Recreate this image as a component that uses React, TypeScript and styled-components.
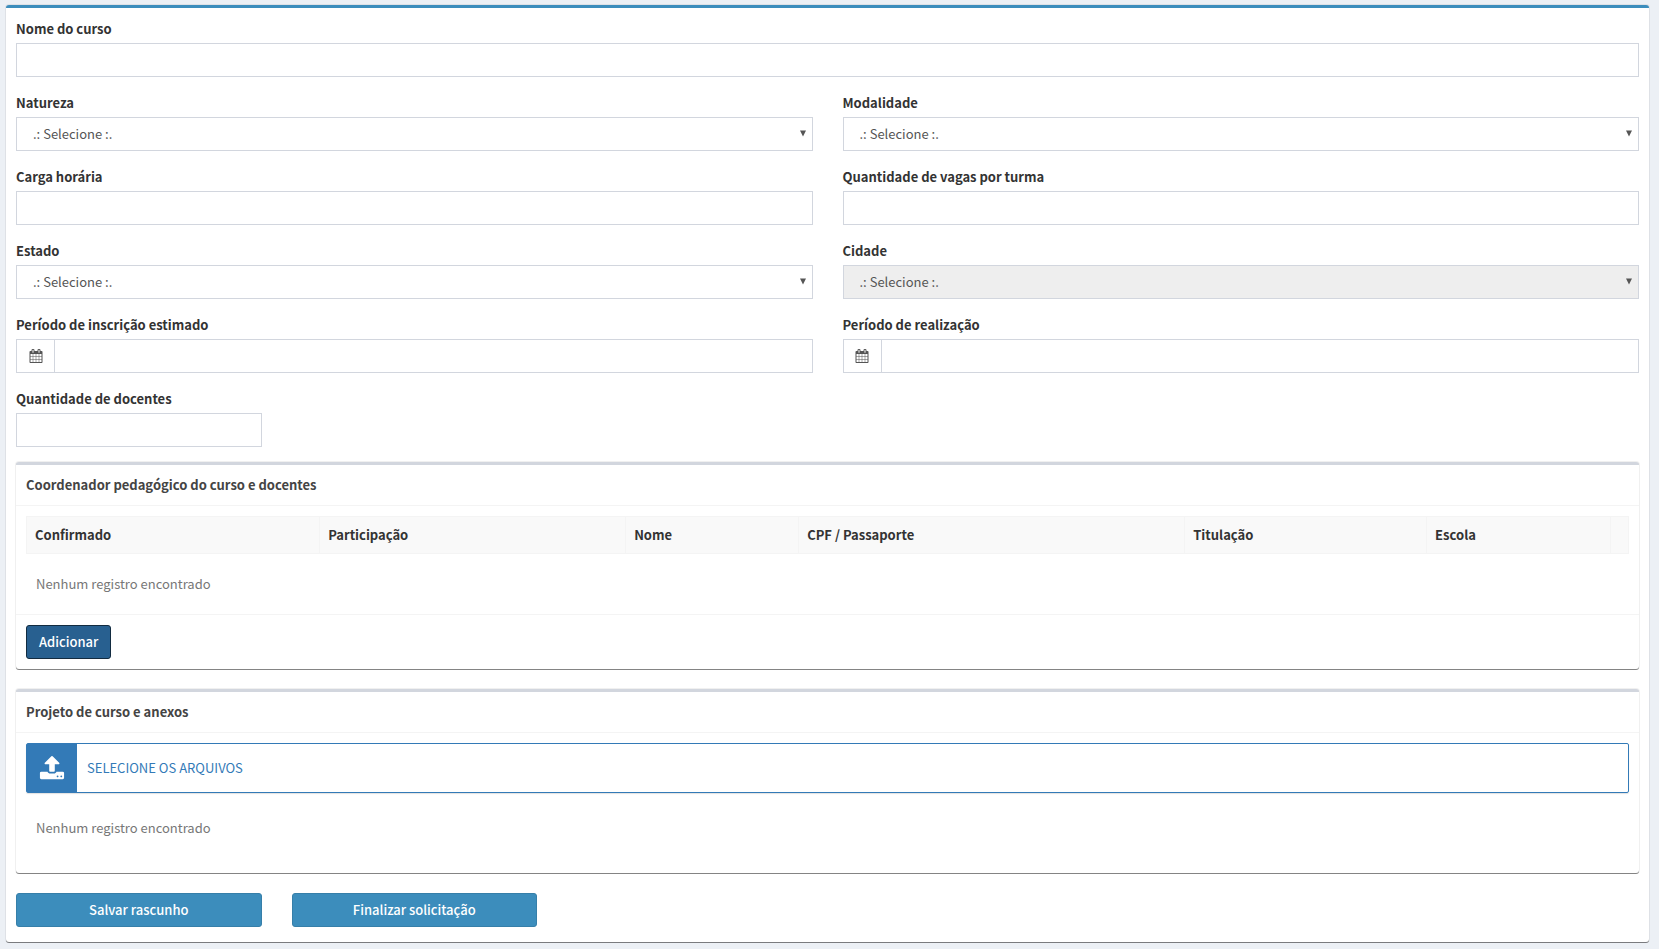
import React, { useId } from "react";
import styled, { createGlobalStyle } from "styled-components";

const GlobalStyle = createGlobalStyle`
  *, *::before, *::after { box-sizing: border-box; }
  body {
    margin: 0;
    background: #ecf0f5;
    color: #333;
    font: 400 13px/20px "Noto Sans CJK JP", "Noto Sans", sans-serif;
  }
  input, select, button { font: inherit; }
`;

const Page = styled.main`
  padding: 5px 10px 6px 6px;
`;

const Box = styled.section<{ $accent: string }>`
  background: #fff;
  border-top: 3px solid ${(p) => p.$accent};
  border-radius: 3px;
  box-shadow: 0 1px 0 rgba(0, 0, 0, 0.45), 0 0 0 1px rgba(0, 0, 0, 0.06);
`;

const Form = styled.form`
  display: flex;
  flex-direction: column;
  padding: 10px 10px 15px;
`;

const Columns = styled.div<{ $count: number }>`
  display: grid;
  grid-template-columns: repeat(${(p) => p.$count}, minmax(0, 1fr));
  column-gap: 30px;
`;

const Group = styled.div`
  display: flex;
  flex-direction: column;
  margin-bottom: 15px;
`;

const Label = styled.label`
  margin-bottom: 3px;
  font-weight: 700;
  line-height: 22px;
`;

const TextInput = styled.input`
  flex: 1;
  width: 100%;
  min-width: 0;
  height: 34px;
  min-height: 34px;
  padding: 6px 12px;
  border: 1px solid #d2d6de;
  border-radius: 0;
  background: #fff;
  color: #555;
`;

const SelectWrap = styled.div`
  position: relative;
`;

const SelectInput = styled.select`
  display: block;
  width: 100%;
  height: 34px;
  padding: 6px 30px 6px 16px;
  border: 1px solid #d2d6de;
  border-radius: 0;
  appearance: none;
  background: #fff;
  color: #555;
  opacity: 1;
  &:disabled { background: #eee; }
`;

const Arrow = styled.svg`
  position: absolute;
  right: 7px;
  top: 13px;
  width: 6px;
  height: 7px;
  fill: #555;
  pointer-events: none;
`;

const InputGroup = styled.div`
  display: flex;
`;

const Addon = styled.span`
  display: flex;
  align-items: center;
  justify-content: center;
  width: 38px;
  border: 1px solid #d2d6de;
  border-right: 0;
  color: #555;
`;

const BoxHeader = styled.header`
  padding: 10px;
  border-bottom: 1px solid #f4f4f4;
`;

const BoxTitle = styled.h3`
  margin: 0;
  font-size: 13px;
  line-height: 20px;
  font-weight: 700;
  color: #444;
`;

const BoxBody = styled.div`
  padding: 10px;
`;

const BoxFooter = styled.footer`
  padding: 10px;
  border-top: 1px solid #f4f4f4;
`;

const Panels = styled.div`
  display: grid;
  row-gap: 20px;
  margin-bottom: 20px;
`;

const Table = styled.table`
  width: 100%;
  table-layout: fixed;
  border-collapse: collapse;
`;

const HeadCell = styled.th<{ $width?: string }>`
  width: ${(p) => p.$width ?? "auto"};
  height: 37px;
  padding: 8px;
  border: 1px solid #f4f4f4;
  background: #f9f9f9;
  text-align: left;
`;

const Empty = styled.p<{ $margin: string }>`
  margin: ${(p) => p.$margin};
  padding: 10px;
  color: #777;
`;

const Button = styled.button<{ $tone: "dark" | "light" }>`
  height: 34px;
  padding: 6px 12px;
  border: 1px solid ${(p) => (p.$tone === "dark" ? "#122b40" : "#367fa9")};
  border-radius: 3px;
  background: ${(p) => (p.$tone === "dark" ? "#286090" : "#3c8dbc")};
  color: #fff;
  font-weight: 500;
  line-height: 20px;
  cursor: pointer;
`;

const Upload = styled.label`
  position: relative;
  display: flex;
  align-items: center;
  height: 50px;
  border: 1px solid #337ab7;
  border-radius: 2px;
  box-shadow: 0 1px 1px rgba(0, 0, 0, 0.12);
  color: #337ab7;
  cursor: pointer;
`;

const UploadIcon = styled.span`
  display: flex;
  align-items: center;
  justify-content: center;
  align-self: stretch;
  width: 50px;
  margin-right: 10px;
  background: #337ab7;
  color: #fff;
`;

const FileInput = styled.input`
  position: absolute;
  inset: 0;
  width: 100%;
  opacity: 0;
  cursor: pointer;
`;

const Glyph = ({ size, d }: { size: number; d: string }) => (
  <svg width={size} height={size} viewBox="0 0 1792 1792" fill="currentColor" aria-hidden="true">
    <path d={d} />
  </svg>
);

const calendarPath =
  "M192 1664h288v-288h-288v288zM544 1664h320v-288h-320v288zM192 1312h288v-320h-288v320zM544 1312h320v-320h-320v320zM192 928h288v-288h-288v288zM928 1664h320v-288h-320v288zM544 928h320v-288h-320v288zM1312 1664h288v-288h-288v288zM928 1312h320v-320h-320v320zM576 448v-288q0-13-9.5-22.5t-22.5-9.5h-64q-13 0-22.5 9.5t-9.5 22.5v288q0 13 9.5 22.5t22.5 9.5h64q13 0 22.5-9.5t9.5-22.5zM1312 1312h288v-320h-288v320zM928 928h320v-288h-320v288zM1312 928h288v-288h-288v288zM1344 448v-288q0-13-9.5-22.5t-22.5-9.5h-64q-13 0-22.5 9.5t-9.5 22.5v288q0 13 9.5 22.5t22.5 9.5h64q13 0 22.5-9.5t9.5-22.5zM1728 384v1280q0 52-38 90t-90 38h-1408q-52 0-90-38t-38-90v-1280q0-52 38-90t90-38h128v-96q0-66 47-113t113-47h64q66 0 113 47t47 113v96h384v-96q0-66 47-113t113-47h64q66 0 113 47t47 113v96h128q52 0 90 38t38 90z";

const uploadPath =
  "M1344 1472q0-26-19-45t-45-19-45 19-19 45 19 45 45 19 45-19 19-45zm256 0q0-26-19-45t-45-19-45 19-19 45 19 45 45 19 45-19 19-45zm128-224v320q0 40-28 68t-68 28h-1472q-40 0-68-28t-28-68v-320q0-40 28-68t68-28h427q21 56 70.5 92t110.5 36h256q61 0 110.5-36t70.5-92h427q40 0 68 28t28 68zm-325-648q-17 40-59 40h-256v448q0 26-19 45t-45 19h-256q-26 0-45-19t-19-45v-448h-256q-42 0-59-40-17-39 14-69l448-448q18-19 45-19t45 19l448 448q31 30 14 69z";

function TextField({ label }: { label: string }) {
  const id = useId();
  return (
    <Group>
      <Label htmlFor={id}>{label}</Label>
      <TextInput id={id} type="text" />
    </Group>
  );
}

function SelectField({ label, disabled }: { label: string; disabled?: boolean }) {
  const id = useId();
  return (
    <Group>
      <Label htmlFor={id}>{label}</Label>
      <SelectWrap>
        <SelectInput id={id} disabled={disabled}>
          <option>.: Selecione :.</option>
        </SelectInput>
        <Arrow viewBox="0 0 6 7" aria-hidden="true">
          <path d="M0 0.5h6l-3 6z" />
        </Arrow>
      </SelectWrap>
    </Group>
  );
}

function DateField({ label }: { label: string }) {
  const id = useId();
  return (
    <Group>
      <Label htmlFor={id}>{label}</Label>
      <InputGroup>
        <Addon>
          <Glyph size={14} d={calendarPath} />
        </Addon>
        <TextInput id={id} type="text" />
      </InputGroup>
    </Group>
  );
}

const tableColumns = [
  { title: "Confirmado", width: "18.3%" },
  { title: "Participação", width: "19.1%" },
  { title: "Nome", width: "10.8%" },
  { title: "CPF / Passaporte", width: "24.1%" },
  { title: "Titulação", width: "15.1%" },
  { title: "Escola", width: "11.5%" },
];

export default function App() {
  return (
    <>
      <GlobalStyle />
      <Page>
        <Box $accent="#3c8dbc">
          <Form onSubmit={(e) => e.preventDefault()}>
            <TextField label="Nome do curso" />
            <Columns $count={2}>
              <SelectField label="Natureza" />
              <SelectField label="Modalidade" />
              <TextField label="Carga horária" />
              <TextField label="Quantidade de vagas por turma" />
              <SelectField label="Estado" />
              <SelectField label="Cidade" disabled />
              <DateField label="Período de inscrição estimado" />
              <DateField label="Período de realização" />
            </Columns>
            <Columns $count={6}>
              <TextField label="Quantidade de docentes" />
            </Columns>
            <Panels>
              <Box $accent="#d2d6de">
                <BoxHeader>
                  <BoxTitle>Coordenador pedagógico do curso e docentes</BoxTitle>
                </BoxHeader>
                <BoxBody>
                  <Table>
                    <thead>
                      <tr>
                        {tableColumns.map((c) => (
                          <HeadCell key={c.title} scope="col" $width={c.width}>
                            {c.title}
                          </HeadCell>
                        ))}
                        <HeadCell as="td" />
                      </tr>
                    </thead>
                  </Table>
                  <Empty $margin="10px 0 0">Nenhum registro encontrado</Empty>
                </BoxBody>
                <BoxFooter>
                  <Button type="button" $tone="dark">Adicionar</Button>
                </BoxFooter>
              </Box>
              <Box $accent="#d2d6de">
                <BoxHeader>
                  <BoxTitle>Projeto de curso e anexos</BoxTitle>
                </BoxHeader>
                <BoxBody>
                  <Upload>
                    <UploadIcon>
                      <Glyph size={26} d={uploadPath} />
                    </UploadIcon>
                    SELECIONE OS ARQUIVOS
                    <FileInput type="file" multiple />
                  </Upload>
                  <Empty $margin="15px 0">Nenhum registro encontrado</Empty>
                </BoxBody>
              </Box>
            </Panels>
            <Columns $count={6}>
              <Button type="button" $tone="light">Salvar rascunho</Button>
              <Button type="submit" $tone="light">Finalizar solicitação</Button>
            </Columns>
          </Form>
        </Box>
      </Page>
    </>
  );
}
